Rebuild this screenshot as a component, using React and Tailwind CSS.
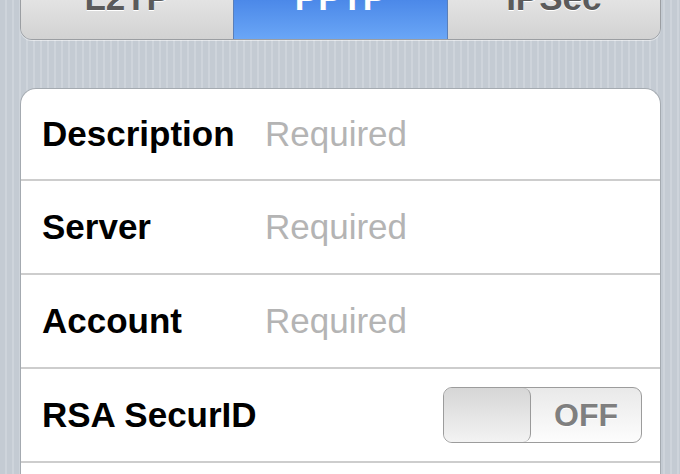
import React from "react";

const fields = [
  { label: "Description", first: true },
  { label: "Server" },
  { label: "Account" },
];

function Segment({ children, active, className = "" }) {
  if (active) {
    return (
      <div className={`flex-1 flex items-center justify-center bg-gradient-to-b from-[#2f6fd9] via-[#4a87e8] to-[#6aa6f6] text-white [text-shadow:0_-1px_0_rgba(0,0,0,0.35)] ${className}`}>
        {children}
      </div>
    );
  }
  return (
    <div className={`flex-1 flex items-center justify-center bg-gradient-to-b from-[#f6f6f6] via-[#e4e4e4] to-[#d2d2d2] text-[#5b5b5b] [text-shadow:0_1px_0_#fff] ${className}`}>
      {children}
    </div>
  );
}

function Toggle() {
  return (
    <div className="flex w-[199px] h-[56px] rounded-[9px] border border-[#9c9c9c] overflow-hidden bg-gradient-to-b from-[#e9e9e9] to-[#fdfdfd]">
      <div className="w-[87px] h-full rounded-[8px] border-r border-[#9a9a9a] bg-gradient-to-b from-[#d6d6d6] to-[#f3f3f3]" />
      <div className="flex-1 flex items-center justify-center text-[32px] font-bold text-[#7f7f7f] [text-shadow:0_1px_0_#fff]">
        OFF
      </div>
    </div>
  );
}

export default function App() {
  return (
    <div
      className="w-[680px] h-[474px] overflow-hidden bg-[repeating-linear-gradient(90deg,#c4cbd3_0px,#c4cbd3_5px,#ced4db_5px,#ced4db_7px)] px-[20px]"
      style={{ fontFamily: '"Liberation Sans", Arial, sans-serif' }}
    >
      <div className="-mt-[44px] h-[84px] flex rounded-[12px] border border-[#9b9ea2] overflow-hidden text-[35px] font-bold w-[641px] shadow-[0_1px_0_rgba(255,255,255,0.5)]">
        <Segment>L2TP</Segment>
        <Segment active className="border-x border-[#5a7fb8]">PPTP</Segment>
        <Segment>IPSec</Segment>
      </div>

      <div className="mt-[48px] w-[641px] rounded-t-[16px] border border-b-0 border-[#a4aab0] bg-white">
        {fields.map((f) => (
          <div
            key={f.label}
            className={`flex items-center pl-[21px] border-b-2 border-[#cdcdcd] ${f.first ? "h-[92px]" : "h-[94px]"}`}
          >
            <div className="w-[223px] text-[35px] font-bold text-black">{f.label}</div>
            <div className="text-[35px] text-[#b4b4b4]">Required</div>
          </div>
        ))}
        <div className="flex items-center justify-between pl-[21px] pr-[18px] h-[94px] border-b-2 border-[#cdcdcd]">
          <div className="text-[35px] font-bold text-black">RSA SecurID</div>
          <Toggle />
        </div>
        <div className="h-[40px]" />
      </div>
    </div>
  );
}
